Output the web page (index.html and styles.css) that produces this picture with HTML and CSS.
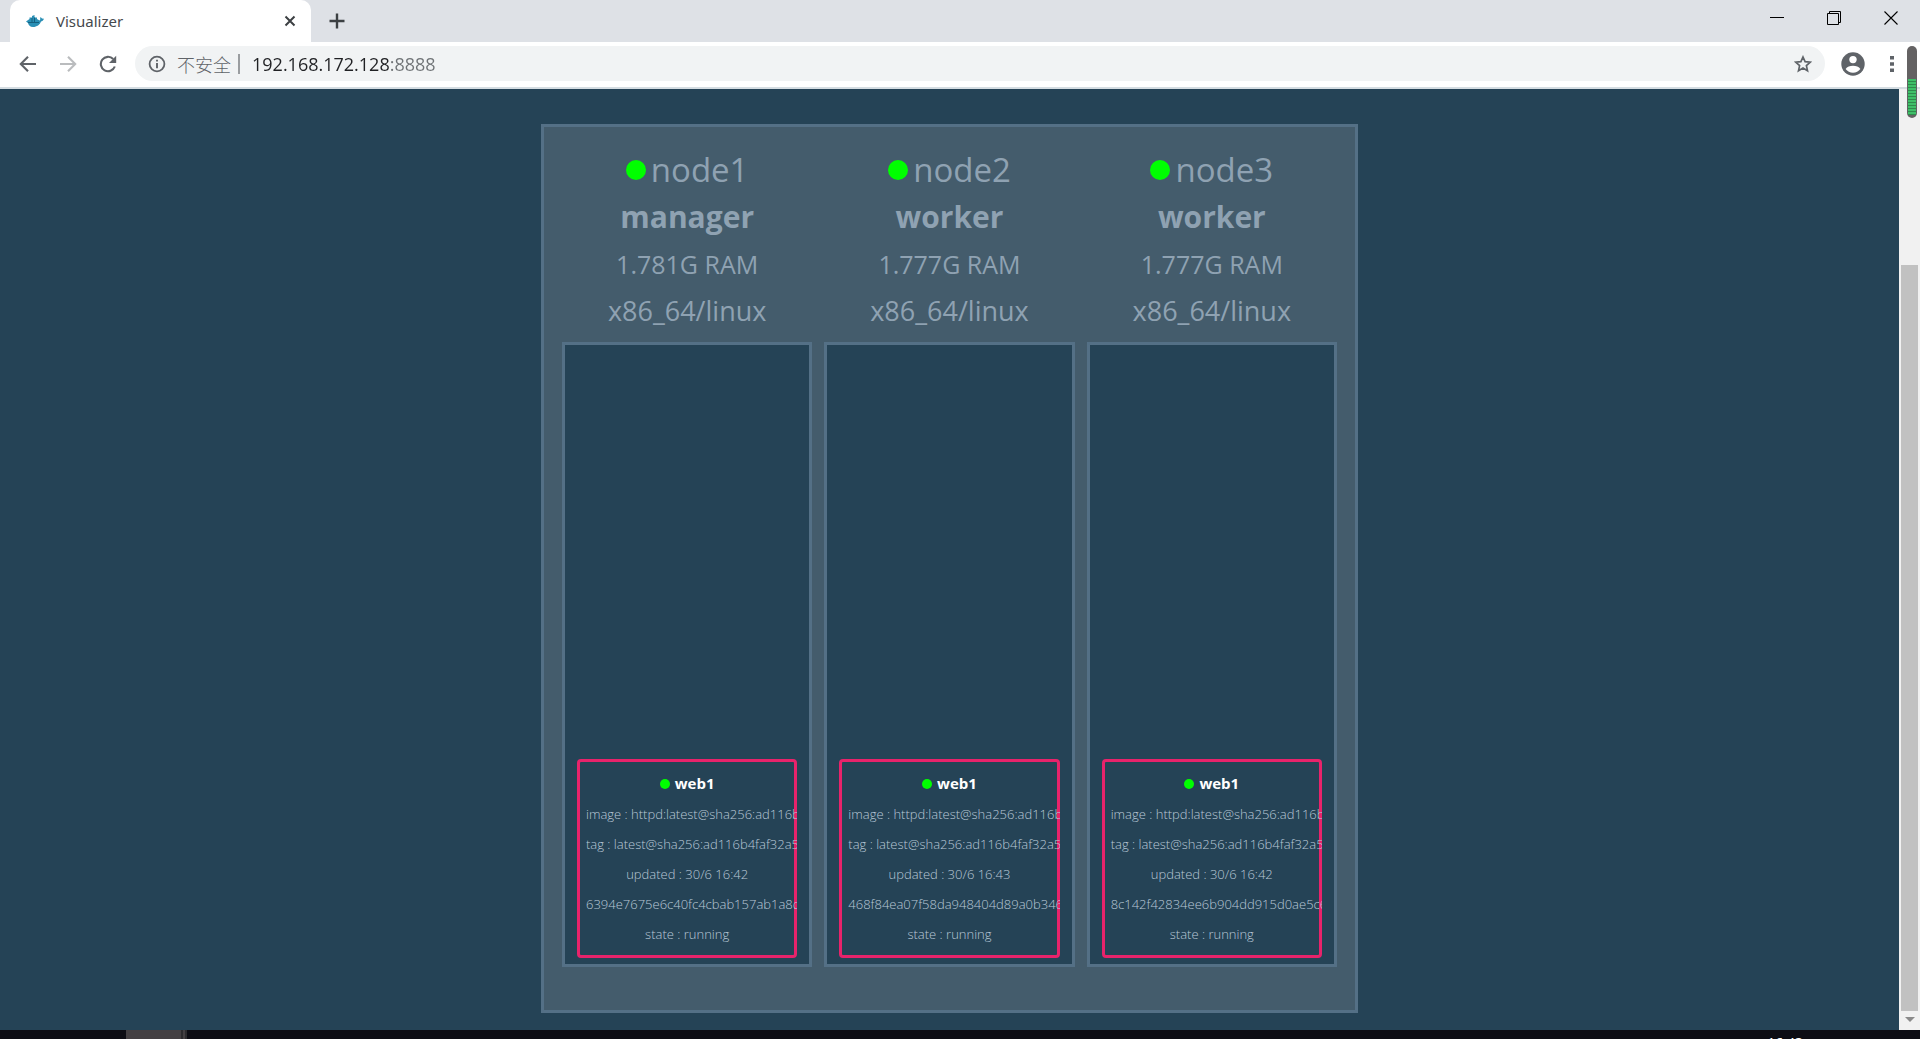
FILE: index.html
```html
<!DOCTYPE html>
<html lang="zh-CN">
<head>
<meta charset="utf-8">
<title>Visualizer</title>
<link rel="stylesheet" href="styles.css">
</head>
<body>
<div class="window">
  <header class="tabstrip">
    <div class="tab">
      <svg class="favicon" viewBox="0 0 18 12" aria-hidden="true"><path fill="#2a8fb5" d="M0 6.500L3.500 4V2.500H6V1L8.500 0V2.500H11V4L13.500 5.500C14.500 5 14.300 3.500 14 2.200C15.200 2.500 15.800 3 16 3.600L18 3.800C17.500 5.500 16 6.200 15 6.500C14 9.500 11 12 7 12C4 12 2.500 10 2 8Z"/><path stroke="#14607f" fill="none" d="M2 7.500H13M6 3V7M8.500 2.500V7"/></svg>
      <span class="tab-title">Visualizer</span>
      <button class="icon-btn tab-close" aria-label="Close tab"><svg width="12" height="12" viewBox="0 0 12 12"><path d="M1.500 1.500L10.500 10.500M10.500 1.500L1.500 10.500" stroke="#3c4043" stroke-width="2"/></svg></button>
    </div>
    <button class="icon-btn new-tab" aria-label="New tab"><svg width="16" height="16" viewBox="0 0 16 16"><path d="M8 .5V15.500M.5 8H15.500" stroke="#3c4043" stroke-width="2.400"/></svg></button>
    <div class="window-controls">
      <button class="icon-btn" aria-label="Minimize"><svg width="14" height="14" viewBox="0 0 14 14"><path d="M0 6.500H14" stroke="#000"/></svg></button>
      <button class="icon-btn" aria-label="Restore"><svg width="14" height="14" viewBox="0 0 14 14"><path d="M.5 2.500H11.500V13.500H.5ZM2.500 2.500V.5H13.500V11.500H11.500" stroke="#000" fill="none"/></svg></button>
      <button class="icon-btn" aria-label="Close"><svg width="14" height="14" viewBox="0 0 14 14"><path d="M.5 .5L13.500 13.500M13.500 .5L.5 13.500" stroke="#000" stroke-width="1.100"/></svg></button>
    </div>
  </header>

  <div class="toolbar">
    <nav class="nav-buttons">
      <button class="icon-btn" aria-label="Back"><svg width="18" height="18" viewBox="0 0 18 18"><path d="M17 9H2.500M9 1.800L1.800 9L9 16.200" stroke="#5f6368" stroke-width="2.100" fill="none"/></svg></button>
      <button class="icon-btn" aria-label="Forward" disabled><svg width="18" height="18" viewBox="0 0 18 18"><path d="M1 9H15.500M9 1.800L16.200 9L9 16.200" stroke="#babcbe" stroke-width="2.100" fill="none"/></svg></button>
      <button class="icon-btn" aria-label="Reload"><svg width="18" height="18" viewBox="0 0 18 18"><path d="M15.800 11.500A7.200 7.200 0 1 1 14.200 4" stroke="#5f6368" stroke-width="2.100" fill="none"/><path d="M17.200 .8V8H10Z" fill="#5f6368"/></svg></button>
    </nav>
    <div class="omnibox">
      <svg width="18" height="18" viewBox="0 0 18 18" aria-hidden="true"><circle cx="9" cy="9" r="7.400" fill="none" stroke="#5f6368" stroke-width="1.800"/><path d="M9 8V13.200M9 4.800V6.600" stroke="#5f6368" stroke-width="1.900"/></svg>
      <label class="security" for="address">不安全</label>
      <input class="address" id="address" type="text" value="192.168.172.128:8888" spellcheck="false">
      <button class="icon-btn" aria-label="Bookmark"><svg width="18" height="18" viewBox="0 0 18 18"><path d="M9 2L11.100 6.700L16.300 7.200L12.400 10.600L13.500 15.700L9 13L4.500 15.700L5.600 10.600L1.700 7.200L6.900 6.700Z" stroke="#5f6368" stroke-width="1.700" fill="none"/></svg></button>
    </div>
    <button class="icon-btn" aria-label="Profile"><svg width="24" height="24" viewBox="0 0 24 24"><circle cx="12" cy="12" r="11.700" fill="#5f6368"/><circle cx="12" cy="7.600" r="3.700" fill="#fff"/><path d="M4.600 17C6 14.700 9 13.800 12 13.800S18 14.700 19.400 17C17.600 19.400 15 20.700 12 20.700S6.400 19.400 4.600 17Z" fill="#fff"/></svg></button>
    <button class="icon-btn menu" aria-label="Menu"><svg width="4" height="18" viewBox="0 0 4 18"><path d="M0 1H4V4.500H0ZM0 7.200H4V10.700H0ZM0 13.400H4V16.900H0Z" fill="#5f6368"/></svg></button>
  </div>

  <div class="viewport">
    <main class="page">
      <div class="cluster">
        <section class="node">
          <h2 class="node-name"><span class="dot"></span>node1</h2>
          <p class="node-role">manager</p>
          <p class="node-ram">1.781G RAM</p>
          <p class="node-arch">x86_64/linux</p>
          <div class="node-tasks">
            <article class="task">
              <h3 class="task-name"><span class="dot dot-small"></span>web1</h3>
              <p>image : httpd:latest@sha256:ad116b4faf32a5</p>
              <p>tag : latest@sha256:ad116b4faf32a5</p>
              <p>updated : 30/6 16:42</p>
              <p>6394e7675e6c40fc4cbab157ab1a8d9</p>
              <p>state : running</p>
            </article>
          </div>
        </section>
        <section class="node">
          <h2 class="node-name"><span class="dot"></span>node2</h2>
          <p class="node-role">worker</p>
          <p class="node-ram">1.777G RAM</p>
          <p class="node-arch">x86_64/linux</p>
          <div class="node-tasks">
            <article class="task">
              <h3 class="task-name"><span class="dot dot-small"></span>web1</h3>
              <p>image : httpd:latest@sha256:ad116b4faf32a5</p>
              <p>tag : latest@sha256:ad116b4faf32a5</p>
              <p>updated : 30/6 16:43</p>
              <p>468f84ea07f58da948404d89a0b3460</p>
              <p>state : running</p>
            </article>
          </div>
        </section>
        <section class="node">
          <h2 class="node-name"><span class="dot"></span>node3</h2>
          <p class="node-role">worker</p>
          <p class="node-ram">1.777G RAM</p>
          <p class="node-arch">x86_64/linux</p>
          <div class="node-tasks">
            <article class="task">
              <h3 class="task-name"><span class="dot dot-small"></span>web1</h3>
              <p>image : httpd:latest@sha256:ad116b4faf32a5</p>
              <p>tag : latest@sha256:ad116b4faf32a5</p>
              <p>updated : 30/6 16:42</p>
              <p>8c142f42834ee6b904dd915d0ae5c6</p>
              <p>state : running</p>
            </article>
          </div>
        </section>
      </div>
    </main>
    <div class="scrollbar">
      <div class="scroll-thumb"></div>
      <svg class="scroll-arrow" width="10" height="5" viewBox="0 0 10 5"><path d="M0 0H10L5 5Z" fill="#8a8a8a"/></svg>
    </div>
  </div>
  <footer class="taskbar"><div class="taskbar-item"></div><time class="clock">16:43</time></footer>
  <div class="meter"><div class="meter-level"></div></div>
</div>
</body>
</html>
```
FILE: styles.css
```css
* { box-sizing: border-box; }

body {
  margin: 0;
  font-family: "Open Sans", "Noto Sans CJK SC", sans-serif;
}

h2, h3, p { margin: 0; }

.window {
  position: relative;
  display: flex;
  flex-direction: column;
  min-height: 100vh;
  background: #254356;
}

.icon-btn {
  display: flex;
  align-items: center;
  justify-content: center;
  padding: 0;
  border: 0;
  background: none;
}

/* Tab strip */
.tabstrip {
  display: flex;
  height: 42px;
  padding-left: 10px;
  background: #dee1e6;
}

.tab {
  display: flex;
  align-items: center;
  width: 301px;
  padding: 0 15px 0 16px;
  border-radius: 10px 10px 0 0;
  background: #fff;
}

.favicon { width: 18px; height: 12px; }

.tab-title {
  flex: 1;
  margin-left: 12px;
  font-family: "Noto Sans", sans-serif;
  font-size: 15px;
  color: #45494d;
}

.new-tab { margin-left: 18px; }

.window-controls {
  display: flex;
  gap: 43px;
  margin-left: auto;
  padding: 0 22px 6px 0;
}

/* Toolbar */
.toolbar {
  display: flex;
  align-items: center;
  height: 47px;
  padding: 0 26px 2px 19px;
  border-bottom: 2px solid #d5dde2;
  background: #fff;
}

.nav-buttons { display: flex; gap: 22px; }

.omnibox {
  display: flex;
  flex: 1;
  align-items: center;
  height: 35px;
  margin: 0 16px 0 18px;
  padding: 0 13px;
  border-radius: 18px;
  background: #f1f3f4;
}

.security {
  margin-left: 11px;
  padding-right: 7px;
  border-right: 2px solid #9a9da0;
  font-family: "Noto Sans CJK SC", sans-serif;
  font-size: 18px;
  font-weight: 300;
  line-height: 20px;
  color: #5f6368;
}

.address {
  flex: 1;
  min-width: 0;
  height: 30px;
  margin-left: 12px;
  padding: 0;
  border: 0;
  outline: 0;
  font-family: "Open Sans", sans-serif;
  font-size: 18px;
  color: transparent;
  background: linear-gradient(to right, #202124 137px, #6e7275 137px);
  background-clip: text;
}

.menu { margin-left: 25px; }

/* Page */
.viewport { display: flex; flex: 1; }

.page {
  display: flex;
  flex: 1;
  justify-content: center;
  padding: 35px 0 17px;
}

.cluster {
  display: flex;
  gap: 12px;
  width: 817px;
  padding: 19px 18px 43px;
  border: 3px solid #547086;
  background: #445c6c;
  color: #8fa2b2;
}

.node {
  display: flex;
  flex: 1;
  flex-direction: column;
  min-width: 0;
  text-align: center;
  line-height: 47px;
}

.node-name {
  display: flex;
  align-items: center;
  justify-content: center;
  gap: 5px;
  font-size: 33px;
  font-weight: 400;
}

.dot {
  width: 20px;
  height: 20px;
  border-radius: 50%;
  background: #00ff00;
}

.dot-small { width: 10px; height: 10px; }

.node-role { font-size: 30px; font-weight: 700; }

.node-ram { font-size: 25px; line-height: 48px; }

.node-arch { font-size: 27px; line-height: 45px; }

.node-tasks {
  display: flex;
  flex: 1;
  flex-direction: column;
  justify-content: flex-end;
  margin-top: 9px;
  padding: 12px 12px 6px;
  border: 3px solid #547086;
  background: #254356;
}

.task {
  padding: 6px;
  border: 3px solid #e8236b;
  border-radius: 4px;
  overflow: clip;
  overflow-clip-margin: border-box;
  font-size: 13px;
  font-weight: 300;
  line-height: 30px;
  white-space: nowrap;
  color: #b9c8d6;
}

.task-name {
  display: flex;
  align-items: center;
  justify-content: center;
  gap: 5px;
  font-size: 15px;
  font-weight: 700;
  line-height: 31px;
  color: #fff;
}

/* Scrollbar */
.scrollbar {
  display: flex;
  flex-direction: column;
  align-items: center;
  width: 21px;
  padding: 176px 0 8px;
  background: #f1f1f1;
}

.scroll-thumb {
  flex: 1;
  width: 17px;
  background: #c1c1c1;
}

.scroll-arrow { margin-top: 6px; }

/* Taskbar edge */
.taskbar {
  display: flex;
  justify-content: space-between;
  height: 9px;
  padding: 0 117px 0 126px;
  overflow: hidden;
  background: #0d0d14;
}

.taskbar-item {
  width: 61px;
  height: 9px;
  border-right: 6px double #2c2b2e;
  background: #444043;
}

.clock {
  padding-top: 3px;
  font-size: 14px;
  line-height: 20px;
  color: #fff;
}

/* Floating level meter */
.meter {
  position: absolute;
  top: 46px;
  right: 3px;
  display: flex;
  flex-direction: column;
  width: 10px;
  height: 72px;
  padding: 33px 1px 3px;
  border-radius: 5px;
  background: #646263;
}

.meter-level {
  flex: 1;
  background: repeating-linear-gradient(#3fbf68 0 2px, #2f8a4c 2px 3px);
}
```
